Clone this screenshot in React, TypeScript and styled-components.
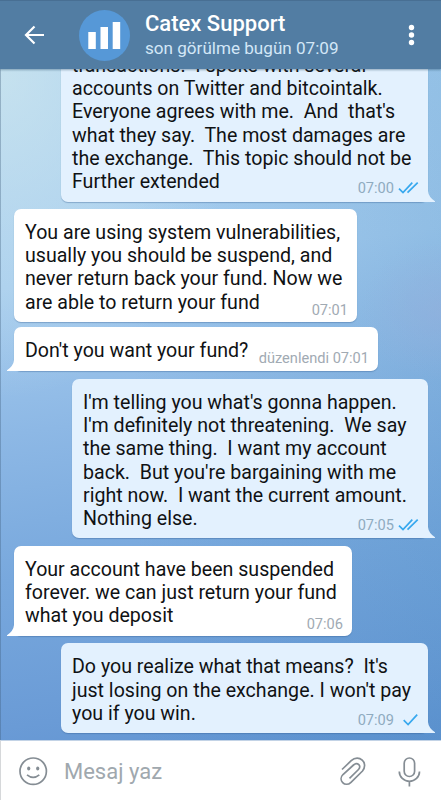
import React from 'react';
import styled, { createGlobalStyle } from 'styled-components';

const GlobalStyle = createGlobalStyle`
  * { box-sizing: border-box; }
  body { margin: 0; font-family: Roboto, sans-serif; }
`;

const Screen = styled.div`
  display: flex;
  flex-direction: column;
  width: 441px;
  height: 800px;
  overflow: hidden;
  background: #fff;
`;

const Header = styled.header`
  display: flex;
  align-items: center;
  flex: none;
  height: 69px;
  padding-left: 24px;
  padding-right: 23px;
  background: #527da3;
  border-top: 1px solid #486f93;
  box-shadow: 0 1px 2px rgba(40, 75, 105, 0.45);
  z-index: 1;
`;

const Avatar = styled.div`
  display: flex;
  width: 51px;
  height: 51px;
  margin-left: 35px;
  border-radius: 50%;
  background: #5698d7;
`;

const Titles = styled.div`
  flex: 1;
  margin-left: 15px;
  padding-top: 1px;
  white-space: nowrap;
`;

const Name = styled.h1`
  margin: 0;
  color: #fff;
  font-size: 22px;
  font-weight: 500;
  line-height: 26px;
`;

const LastSeen = styled.div`
  color: #d3e7f7;
  font-size: 17.1px;
  line-height: 23px;
`;

const Conversation = styled.main`
  display: flex;
  flex-direction: column;
  justify-content: flex-end;
  flex: 1;
  min-height: 0;
  overflow: hidden;
  padding: 0 13px 6.7px 14px;
  background:
    linear-gradient(90deg, rgba(60, 90, 120, 0.35) 0 1px, transparent 1px),
    radial-gradient(ellipse 80px 70px at 100% 36%, rgba(150, 174, 219, 0.5), transparent),
    radial-gradient(ellipse 240px 330px at 0 0, rgba(210, 233, 238, 0.7), transparent),
    linear-gradient(90deg, transparent 30%, rgba(65, 135, 190, 0.2) 100%),
    linear-gradient(172deg, #a9d0f0 0%, #a4cbee 30%, #8db8e5 50%, #78a8dd 70%, #6a9bd6 90%, #6093d1 100%);
`;

const Bubble = styled.section<{ $outgoing?: boolean; $width: number; $gap: number }>`
  position: relative;
  flex: none;
  width: ${p => p.$width}px;
  margin-top: ${p => p.$gap}px;
  padding: 11.9px 9px 8.2px 11px;
  align-self: ${p => (p.$outgoing ? 'flex-end' : 'flex-start')};
  background: ${p => (p.$outgoing ? '#e3f1fe' : '#fff')};
  border-radius: 7px;
  box-shadow: 0 1px 1px rgba(45, 90, 140, 0.35);
`;

const TextLine = styled.div`
  height: 23.25px;
  color: #101214;
  font-size: 19.6px;
  line-height: 23.25px;
  white-space: pre;
`;

const LastLine = styled.div`
  display: flex;
  justify-content: space-between;
  align-items: flex-end;
  height: 23.25px;
`;

const Status = styled.div<{ $outgoing?: boolean }>`
  display: flex;
  align-items: center;
  margin-bottom: ${p => (p.$outgoing ? '-4.1px' : '-4.9px')};
  color: ${p => (p.$outgoing ? '#8fabc0' : '#a1aab3')};
  font-size: 14.6px;
  line-height: 18px;
  white-space: nowrap;
`;

const TickIcon = styled.svg`
  margin-left: 4px;
  fill: none;
  stroke: #37a8ee;
  stroke-width: 1.7;
`;

const TailIcon = styled.svg<{ $outgoing?: boolean }>`
  position: absolute;
  bottom: 0;
  ${p => (p.$outgoing ? 'right: -7px;' : 'left: -7px; transform: scaleX(-1);')}
  fill: ${p => (p.$outgoing ? '#e3f1fe' : '#fff')};
`;

const Composer = styled.footer`
  display: flex;
  align-items: center;
  flex: none;
  height: 60px;
  padding: 2px 20px 0 18px;
  background: #fff;
  border-left: 1px solid #d6d8da;
  border-top: 1px solid #c3d3e6;
`;

const Placeholder = styled.div`
  flex: 1;
  margin: 1px 0 0 16px;
  color: #a0a8ae;
  font-size: 22px;
  line-height: 28px;
`;

const LineIcon = styled.svg`
  flex: none;
  fill: none;
  stroke: #858d94;
  stroke-width: 1.7;
`;

const MicIcon = styled(LineIcon)`
  margin-left: 32px;
`;

type Message = {
  lines: string[];
  time: string;
  width: number;
  gap: number;
  outgoing?: boolean;
  tail?: boolean;
  read?: boolean;
};

const messages: Message[] = [
  {
    lines: [
      'transactions.  I spoke with several',
      'accounts on Twitter and bitcointalk.',
      "Everyone agrees with me.  And  that's",
      'what they say.  The most damages are',
      'the exchange.  This topic should not be',
      'Further extended',
    ],
    time: '07:00', width: 367, gap: 0, outgoing: true, tail: true, read: true,
  },
  {
    lines: [
      'You are using system vulnerabilities,',
      'usually you should be suspend, and',
      'never return back your fund. Now we',
      'are able to return your fund',
    ],
    time: '07:01', width: 343, gap: 7.5,
  },
  { lines: ["Don't you want your fund?"], time: 'düzenlendi 07:01', width: 364, gap: 5.2, tail: true },
  {
    lines: [
      "I'm telling you what's gonna happen.",
      "I'm definitely not threatening.  We say",
      'the same thing.  I want my account',
      "back.  But you're bargaining with me",
      'right now.  I want the current amount.',
      'Nothing else.',
    ],
    time: '07:05', width: 356, gap: 8.3, outgoing: true, tail: true, read: true,
  },
  {
    lines: ['Your account have been suspended', 'forever. we can just return your fund', 'what you deposit'],
    time: '07:06', width: 338, gap: 7.6, tail: true,
  },
  {
    lines: ["Do you realize what that means?  It's", "just losing on the exchange. I won't pay", 'you if you win.'],
    time: '07:09', width: 367, gap: 7.6, outgoing: true, tail: true,
  },
];

const Ticks = ({ read }: { read?: boolean }) => (
  <TickIcon width="21" height="14" viewBox="0 0 21 14">
    {read ? (
      <path d="M1 7.6l4 4L14.3 1.6M9.5 11.6L19.7 1.6" />
    ) : (
      <path d="M5.7 7.2l4.4 4.3L19.2 1.6" />
    )}
  </TickIcon>
);

const MessageBubble = ({ message: m }: { message: Message }) => (
  <Bubble $outgoing={m.outgoing} $width={m.width} $gap={m.gap}>
    {m.lines.slice(0, -1).map(line => <TextLine key={line}>{line}</TextLine>)}
    <LastLine>
      <TextLine>{m.lines[m.lines.length - 1]}</TextLine>
      <Status $outgoing={m.outgoing}>
        {m.time}
        {m.outgoing && <Ticks read={m.read} />}
      </Status>
    </LastLine>
    {m.tail && (
      <TailIcon $outgoing={m.outgoing} width="15" height="16" viewBox="0 0 15 16">
        <path d="M0 0H8V5Q8.5 11 15 15.2V16H0Z" />
      </TailIcon>
    )}
  </Bubble>
);

export default function App() {
  return (
    <>
      <GlobalStyle />
      <Screen>
        <Header>
          <svg width="20" height="20" viewBox="0 0 20 20" fill="none" stroke="#fff" strokeWidth="2.2">
            <path d="M20 10H2M10.5 1.5L2 10l8.5 8.5" />
          </svg>
          <Avatar>
            <svg width="51" height="51" viewBox="0 0 51 51" fill="#fff">
              <path d="M9.3 22h7.5v17H9.3zM21.5 17H29v22h-7.5zM33.7 12h7.5v27h-7.5z" />
            </svg>
          </Avatar>
          <Titles>
            <Name>Catex Support</Name>
            <LastSeen>son görülme bugün 07:09</LastSeen>
          </Titles>
          <svg width="10" height="22" viewBox="0 0 10 22" fill="#fff">
            <circle cx="3.5" cy="3.5" r="2.7" />
            <circle cx="3.5" cy="11" r="2.7" />
            <circle cx="3.5" cy="18.5" r="2.7" />
          </svg>
        </Header>
        <Conversation>
          {messages.map(m => <MessageBubble key={m.lines[0]} message={m} />)}
        </Conversation>
        <Composer>
          <LineIcon width="29" height="29" viewBox="0 0 29 29">
            <circle cx="14.2" cy="14.2" r="13.2" />
            <path d="M8 17.8Q14.2 22.8 20.3 17.8" />
            <g fill="#858d94" stroke="none">
              <ellipse cx="9.7" cy="11.5" rx="1.6" ry="2" />
              <ellipse cx="18.7" cy="11.5" rx="1.6" ry="2" />
            </g>
          </LineIcon>
          <Placeholder>Mesaj yaz</Placeholder>
          <LineIcon width="26" height="29" viewBox="0 0 26 29">
            <path d="M2 12.5L11.2 3.7C19-3.5 29 6 22.5 14L11 25.3C5 31-2.5 23 3 17.5L13.5 8C17.5 4.5 22 9 18.5 12.5L9.5 21.3" />
          </LineIcon>
          <MicIcon width="23" height="30" viewBox="0 0 23 30">
            <rect x="6.2" y="1" width="10.4" height="18.5" rx="5.2" />
            <path d="M1.3 14.5a10.1 9.8 0 0 0 20.2 0M11.4 24.3V29.5" />
          </MicIcon>
        </Composer>
      </Screen>
    </>
  );
}
